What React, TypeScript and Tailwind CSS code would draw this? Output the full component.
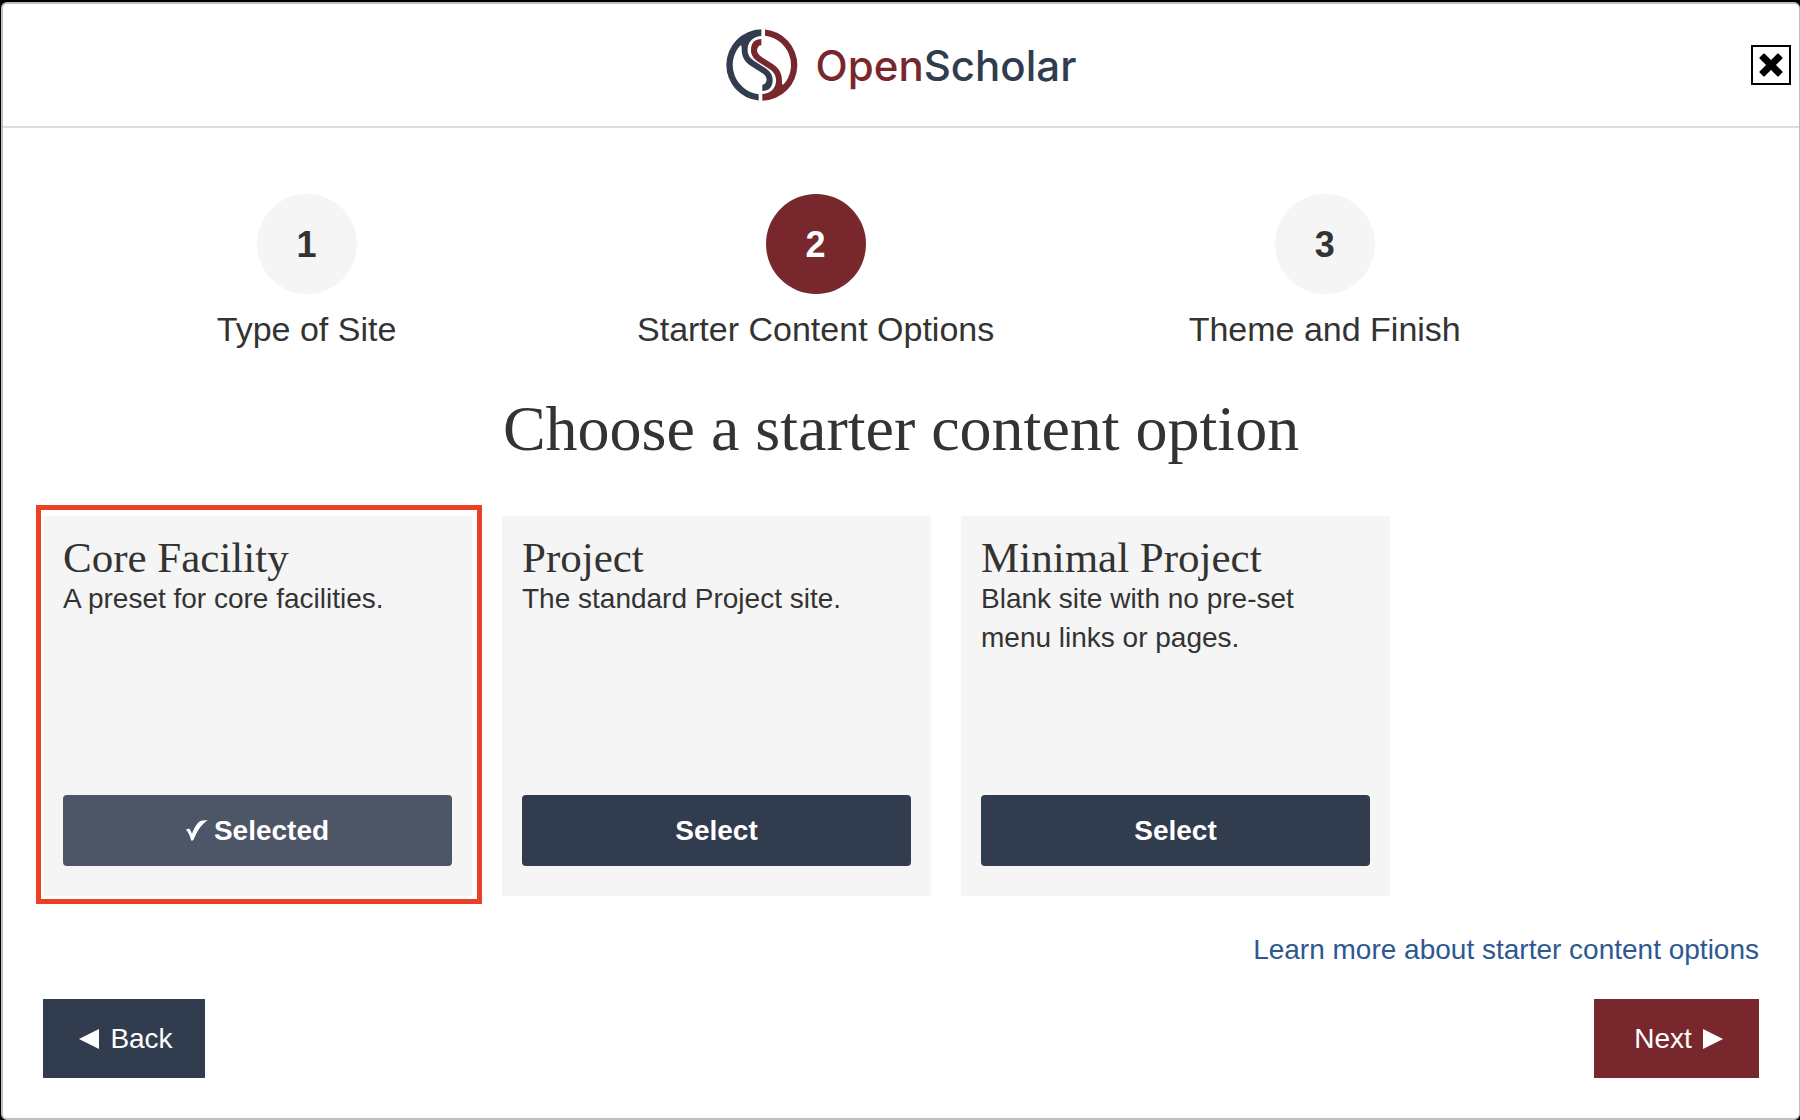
const steps = [
  { number: 1, label: "Type of Site", active: false },
  { number: 2, label: "Starter Content Options", active: true },
  { number: 3, label: "Theme and Finish", active: false },
];

const presets = [
  { title: "Core Facility", text: "A preset for core facilities.", selected: true },
  { title: "Project", text: "The standard Project site.", selected: false },
  { title: "Minimal Project", text: "Blank site with no pre-set menu links or pages.", selected: false },
];

const LOGO_HALF =
  "M156 56 A107 107 0 0 0 51 163 A107 107 0 0 0 148 269.5 V250.5 A88 88 0 0 1 92 105 C95 103 97 105 97 109 C96 135 103 152 125 166 L158 187 C172 196 174 206 170 215 Q167 222 159 222 V241 C178 241 190 230 190 208 C190 192 182 182 168 172 L135 151 C118 140 114 128 115 113 C117 90 135 77 156 76 Z";

function Logo() {
  return (
    <div className="flex items-center gap-[18px]">
      <svg viewBox="50 55 216 216" className="size-[72px]" aria-hidden="true">
        <path d={LOGO_HALF} fill="#313c4e" />
        <path d={LOGO_HALF} fill="#78282c" transform="rotate(180 157.5 163)" />
      </svg>
      <span className="pt-[2px] font-['Inter',sans-serif] text-[42px] leading-[50px] font-medium text-[#313c4e]">
        <span className="text-[#78282c]">Open</span>Scholar
      </span>
    </div>
  );
}

function Check() {
  return (
    <svg viewBox="0 0 22 22" className="size-[22px]" fill="#fff" aria-hidden="true">
      <path d="M0 9.700 C1 9 2 8.700 3.300 8.800 C4.500 10 5.300 12 6 14 C8 8 11 3 14 1.200 C16 .3 19 0 21.700 .2 C16 4 11.500 10 8.300 18 C7.500 20.800 5.500 21.200 5 20 C4 16 2.500 12 0 9.700 Z" />
    </svg>
  );
}

export default function App() {
  return (
    <div className="flex min-h-screen flex-col bg-black pt-[2px] pl-px font-['Liberation_Sans',Arial,sans-serif] text-[28px] leading-[39px] text-[#333]">
      <div className="flex flex-1 flex-col rounded-md border-2 border-r border-[#bfbfbf] bg-white">
        <header className="grid h-[124px] grid-cols-[1fr_auto_1fr] items-center border-b-2 border-[#ddd]">
          <div />
          <Logo />
          <button
            type="button"
            aria-label="Close"
            className="mr-2 flex size-10 items-center justify-center justify-self-end border-2 border-black"
          >
            <svg viewBox="0 0 24 24" className="size-6" aria-hidden="true">
              <path
                d="M5 1.500 L12 8.500 L19 1.500 L22.500 5 L15.500 12 L22.500 19 L19 22.500 L12 15.500 L5 22.500 L1.500 19 L8.500 12 L1.500 5 Z"
                stroke="#000"
                strokeWidth="2"
                strokeLinejoin="round"
              />
            </svg>
          </button>
        </header>

        <main className="flex flex-col px-10 pt-[66px] pb-10">
          <ol className="ml-[9px] grid w-[89%] grid-cols-3">
            {steps.map((s) => (
              <li key={s.number} className="flex flex-col items-center">
                <span
                  className={
                    s.active
                      ? "flex size-[100px] items-center justify-center rounded-full bg-[#78282c] text-[36px] font-bold text-white"
                      : "flex size-[100px] items-center justify-center rounded-full bg-[#f5f5f5] text-[36px] font-bold"
                  }
                >
                  {s.number}
                </span>
                <span className="mt-[15px] text-[34px] leading-10 whitespace-nowrap">{s.label}</span>
              </li>
            ))}
          </ol>

          <h1 className="mt-11 text-center font-['Liberation_Serif',serif] text-[64px] leading-[72px]">
            Choose a starter content option
          </h1>

          <div className="mt-[51px] flex gap-[30px]">
            {presets.map((p) => (
              <section
                key={p.title}
                className="relative flex min-h-[380px] w-1/4 flex-col bg-[#f5f5f5] px-5 pt-[21px] pb-[30px]"
              >
                <h2 className="font-['Liberation_Serif',serif] text-[43px] leading-[42px]">{p.title}</h2>
                <p>{p.text}</p>
                <button
                  type="button"
                  aria-pressed={p.selected}
                  className={
                    p.selected
                      ? "mt-auto flex h-[71px] items-center justify-center gap-[6px] rounded bg-[#4c5667] font-bold text-white"
                      : "mt-auto flex h-[71px] items-center justify-center rounded bg-[#313c4e] font-bold text-white"
                  }
                >
                  {p.selected && <Check />}
                  {p.selected ? "Selected" : "Select"}
                </button>
                {p.selected && (
                  <span className="pointer-events-none absolute -top-[11px] -right-[10px] -bottom-[8px] -left-[7px] border-[5px] border-[#eb4025]" />
                )}
              </section>
            ))}
          </div>

          <a href="#starter-content" className="mt-[34px] self-end text-[#2e5890]">
            Learn more about starter content options
          </a>

          <div className="mt-[30px] flex justify-between">
            <button
              type="button"
              className="flex h-[79px] w-[162px] items-center justify-center gap-[11px] bg-[#313c4e] pl-1 text-white"
            >
              <svg viewBox="0 0 20 20" className="size-5" aria-hidden="true">
                <path d="M20 0 V20 L0 10 Z" fill="#fff" />
              </svg>
              Back
            </button>
            <button
              type="button"
              className="flex h-[79px] w-[165px] items-center justify-center gap-[11px] bg-[#78282c] pl-1 text-white"
            >
              Next
              <svg viewBox="0 0 20 20" className="size-5" aria-hidden="true">
                <path d="M0 0 V20 L20 10 Z" fill="#fff" />
              </svg>
            </button>
          </div>
        </main>
      </div>
    </div>
  );
}
